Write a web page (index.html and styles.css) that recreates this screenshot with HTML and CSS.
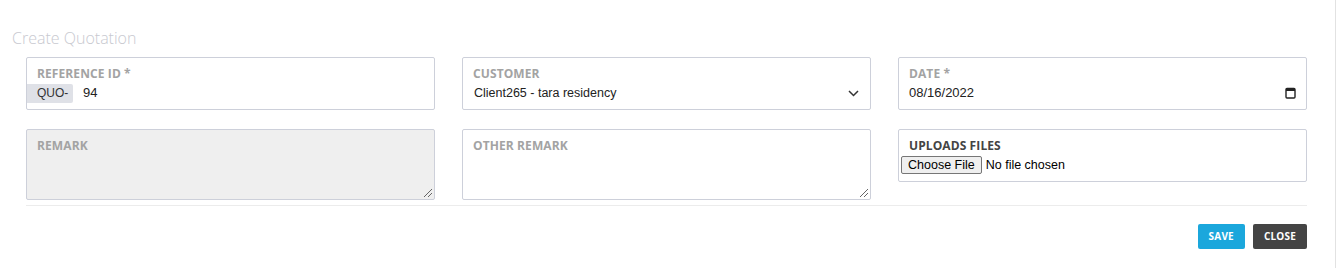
FILE: index.html
```html
<html>

<head>
  <meta charset="utf8">
  <title>Create Quotation</title>
  <link rel="stylesheet" href="styles.css">
</head>

<body>
  <div class="modal">
    <h4 class="title">Create Quotation</h4>
    <form class="form">
      <div class="fields">
        <div class="field">
          <label>Reference ID *</label>
          <div class="control">
            <span class="addon">QUO-</span>
            <span class="value">94</span>
          </div>
        </div>
        <div class="field">
          <label>Customer</label>
          <div class="control select">
            <span class="value">Client265 - tara residency</span>
            <svg class="chevron" width="11" height="7" viewBox="0 0 11 7">
              <path d="M1 1l4.5 4.5L10 1" fill="none" stroke="#333" stroke-width="1.5" />
            </svg>
          </div>
        </div>
        <div class="field">
          <label>Date *</label>
          <div class="control date">
            <span class="value">08/16/2022</span>
            <svg class="calendar" width="11" height="12" viewBox="0 0 11 12">
              <rect x="1" y="1.5" width="9" height="9.5" rx="1" fill="none" stroke="#222" stroke-width="1.4" />
              <rect x="1" y="1.5" width="9" height="2.5" fill="#222" />
            </svg>
          </div>
        </div>
        <div class="field area disabled">
          <label>Remark</label>
          <span class="grip"></span>
        </div>
        <div class="field area">
          <label>Other Remark</label>
          <span class="grip"></span>
        </div>
        <div class="field upload">
          <label class="dark">Uploads Files</label>
          <div class="file">
            <button type="button">Choose File</button>
            <span>No file chosen</span>
          </div>
        </div>
      </div>
      <hr>
      <div class="actions">
        <button type="button" class="btn save">Save</button>
        <button type="button" class="btn close">Close</button>
      </div>
    </form>
  </div>
</body>

</html>
```

FILE: styles.css
```css
body {
  margin: 0;
  background: #fff;
  font: 13px/1.2 "Liberation Sans", Arial, sans-serif;
  color: #222;
}

.modal {
  height: 268px;
  box-sizing: border-box;
  border-right: 1px solid #e2e2e2;
}

.title {
  margin: 0;
  padding: 28px 12px 0;
  font: 300 16px/20px "Open Sans", sans-serif;
  color: #c8c9d0;
}

.form {
  margin: 9px 28px 0 26px;
}

.fields {
  display: grid;
  grid-template-columns: repeat(3, 1fr);
  column-gap: 27px;
  row-gap: 19px;
  align-items: start;
}

.field {
  position: relative;
  box-sizing: border-box;
  height: 53px;
  padding: 8px 10px 0;
  border: 1px solid #cdd0da;
  border-radius: 2px;
  background: #fff;
}

.field label {
  display: block;
  height: 16px;
  font: 700 12px/16px "Open Sans", sans-serif;
  letter-spacing: 0.1px;
  text-transform: uppercase;
  color: #a3a3a3;
}

.field label.dark {
  color: #444;
}

.control {
  display: flex;
  align-items: center;
  height: 22px;
}

.addon {
  display: flex;
  align-items: center;
  box-sizing: border-box;
  height: 19px;
  width: 46px;
  margin-left: -10px;
  padding-left: 10px;
  margin-right: 10px;
  background: #dfe1e7;
  border-radius: 0 2px 2px 0;
  font-size: 12px;
  color: #333;
}

.select .value {
  padding-left: 1px;
  font-size: 12.5px;
}

.select,
.date {
  justify-content: space-between;
}

.chevron {
  margin-right: 1px;
}

.calendar {
  margin-right: 0;
}

.area {
  height: 71px;
}

.disabled {
  background: #efefef;
}

.grip {
  position: absolute;
  right: 2px;
  bottom: 2px;
  width: 8px;
  height: 8px;
  background: linear-gradient(135deg, transparent 0 45%, #666 45% 52%, transparent 52% 70%, #666 70% 77%, transparent 77%);
}

.upload {
  padding-left: 1px;
}

.upload label {
  padding-left: 9px;
}

.file {
  display: flex;
  align-items: center;
  gap: 4px;
  margin-top: 2px;
}

.file button {
  height: 18px;
  margin-left: 1px;
  padding: 0 6px;
  border: 1px solid #767676;
  border-radius: 2px;
  background: #efefef;
  font: 12.5px "Liberation Sans", Arial, sans-serif;
  color: #000;
}

.file span {
  font-size: 12.5px;
  color: #000;
}

hr {
  margin: 5px 0 0;
  border: 0;
  border-top: 1px solid #ececec;
}

.actions {
  display: flex;
  justify-content: flex-end;
  gap: 8px;
  margin-top: 18px;
}

.btn {
  height: 25px;
  padding: 0 11px;
  border: 0;
  border-radius: 2px;
  font: 700 10px/25px "Open Sans", sans-serif;
  letter-spacing: 0.2px;
  text-transform: uppercase;
  color: #fff;
}

.save {
  background: #1ba7dc;
}

.close {
  background: #444;
}
```
